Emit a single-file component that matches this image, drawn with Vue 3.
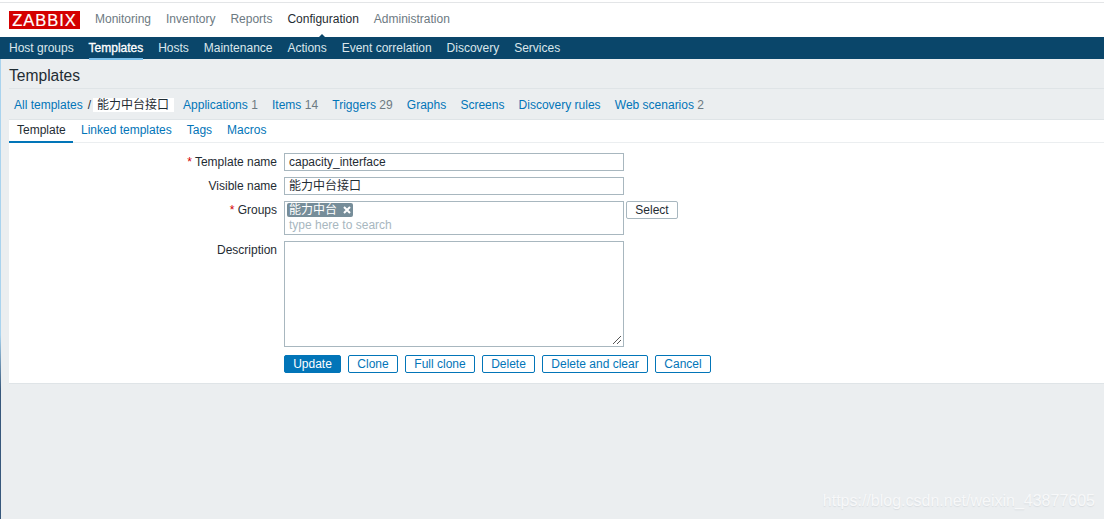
<script setup>
const topNav = ['Monitoring', 'Inventory', 'Reports', 'Configuration', 'Administration']
const subNav = ['Host groups', 'Templates', 'Hosts', 'Maintenance', 'Actions', 'Event correlation', 'Discovery', 'Services']
const crumbs = [
  ['Applications', '1'], ['Items', '14'], ['Triggers', '29'], ['Graphs', ''],
  ['Screens', ''], ['Discovery rules', ''], ['Web scenarios', '2']
]
const tabs = ['Template', 'Linked templates', 'Tags', 'Macros']
const buttons = ['Clone', 'Full clone', 'Delete', 'Delete and clear', 'Cancel']
</script>

<template>
  <div class="page">
    <div class="strip"></div>
    <header class="top">
      <div class="logo">ZABBIX</div>
      <nav class="top-nav">
        <a v-for="n in topNav" :key="n" :class="{ on: n === 'Configuration' }">{{ n }}</a>
      </nav>
    </header>
    <nav class="sub-nav">
      <a v-for="n in subNav" :key="n" :class="{ on: n === 'Templates' }">{{ n }}</a>
    </nav>
    <main class="main">
      <h1 class="title">Templates</h1>
      <div class="crumbs">
        <div class="path">
          <a>All templates</a><span class="slash">/</span><span class="current">能力中台接口</span>
        </div>
        <div class="links">
          <span v-for="c in crumbs" :key="c[0]"><a>{{ c[0] }}</a><i v-if="c[1]">{{ c[1] }}</i></span>
        </div>
      </div>
      <section class="panel">
        <div class="tabs">
          <a v-for="t in tabs" :key="t" :class="{ on: t === 'Template' }">{{ t }}</a>
        </div>
        <form class="form" @submit.prevent>
          <div class="row">
            <label class="label"><b>*</b> Template name</label>
            <div class="field">capacity_interface</div>
          </div>
          <div class="row">
            <label class="label">Visible name</label>
            <div class="field">能力中台接口</div>
          </div>
          <div class="row">
            <label class="label"><b>*</b> Groups</label>
            <div class="multi">
              <span class="chip">能力中台<svg width="8" height="8" viewBox="0 0 8 8"><path d="M1 1 7 7M7 1 1 7" stroke="#fff" stroke-width="2"/></svg></span>
              <span class="hint">type here to search</span>
            </div>
            <button class="select" type="button">Select</button>
          </div>
          <div class="row">
            <label class="label">Description</label>
            <div class="area">
              <svg class="grip" width="10" height="10" viewBox="0 0 10 10"><path d="M1 9 9 1M5 9 9 5" stroke="#555" stroke-width="1"/></svg>
            </div>
          </div>
          <div class="actions">
            <button class="btn primary" type="button">Update</button>
            <button v-for="b in buttons" :key="b" class="btn" type="button">{{ b }}</button>
          </div>
        </form>
      </section>
    </main>
    <div class="edge"></div>
    <div class="mark">https://blog.csdn.net/weixin_43877605</div>
  </div>
</template>

<style>
html, body { margin: 0; background: #ebeef0; }
</style>

<style scoped>
.page {
  position: relative;
  width: 1104px;
  height: 519px;
  overflow: hidden;
  background: #ebeef0;
  font: 12px "Liberation Sans", "Noto Sans CJK SC", sans-serif;
  color: #1f2c33;
}
a { color: inherit; text-decoration: none; }
.strip { height: 2px; background: #fff; border-bottom: 1px solid #e3e5e7; }
.top {
  box-sizing: border-box;
  height: 34px;
  background: #fff;
  display: flex;
  align-items: center;
  padding: 0 0 0 9px;
}
.logo {
  box-sizing: border-box;
  width: 71px;
  height: 18px;
  background: #d40000;
  color: #fff;
  font-size: 16.5px;
  line-height: 18px;
  text-align: center;
  letter-spacing: 1px;
  -webkit-text-stroke: .2px #fff;
}
.top-nav { display: flex; gap: 15px; margin-left: 15px; color: #6d7a82; margin-top: -3px; }
.top-nav .on { color: #1f2c33; position: relative; }
.top-nav .on::after {
  content: "";
  position: absolute;
  left: 29px;
  top: 22px;
  border: 6px solid transparent;
  border-top: 0;
  border-bottom-color: #0a466a;
}
.sub-nav {
  height: 22px;
  background: #0a466a;
  color: #dbe6ec;
  display: flex;
  gap: 14.9px;
  padding-left: 9px;
  line-height: 22px;
}
.sub-nav .on { color: #fff; -webkit-text-stroke: .3px #fff; box-shadow: inset 0 -1px 0 #7cc0ea, 0 1px 0 #7cc0ea; }
.main { display: flex; flex-direction: column; }
.title {
  margin: 0 0 0 9px;
  height: 30px;
  line-height: 33px;
  font-size: 15.6px;
  font-weight: normal;
  color: #1f2c33;
  box-sizing: border-box;
  border-bottom: 1px solid #dfe4e7;
}
.crumbs {
  margin-left: 9px;
  height: 31px;
  display: flex;
  align-items: center;
  border-bottom: 1px solid #dfe4e7;
  box-sizing: border-box;
  padding-top: 2px;
}
.path { display: flex; align-items: center; padding-left: 5px; color: #0275b8; }
.slash { margin: 0 2px 0 5px; color: #1f2c33; }
.current { background: #fff; padding-left: 4px; width: 81px; box-sizing: border-box; white-space: nowrap; color: #1f2c33; line-height: 14px; height: 14px; overflow: hidden; }
.links { display: flex; gap: 14.2px; margin-left: 9px; color: #0275b8; }
.links i { font-style: normal; color: #6d7a82; margin-left: 3.4px; }
.panel {
  margin-left: 9px;
  height: 264px;
  background: #fff;
  border-bottom: 1px solid #dfe4e7;
  box-sizing: border-box;
}
.tabs {
  height: 23px;
  display: flex;
  gap: 15px;
  line-height: 20px;
  color: #0275b8;
  border-bottom: 1px solid #ebeef0;
  box-sizing: border-box;
}
.tabs .on { padding: 0 8px; width: 64px; box-sizing: border-box; color: #1f2c33; box-shadow: inset 0 -1px 0 #0275b8, 0 1px 0 #0275b8; height: 22px; }
.tabs a.on { margin-right: -7px; }
.form { padding-top: 10px; display: flex; flex-direction: column; gap: 6px; }
.row { display: flex; align-items: flex-start; }
.label {
  width: 268px;
  text-align: right;
  line-height: 18px;
  margin-right: 7px;
  flex: none;
}
.label b { color: #d40000; font-weight: normal; }
.field, .multi, .area {
  box-sizing: border-box;
  width: 340px;
  border: 1px solid #a8b7bf;
  background: #fff;
  flex: none;
}
.field { height: 18px; line-height: 16px; padding-left: 4px; }
.multi { height: 34px; padding-left: 2px; display: flex; flex-direction: column; align-items: flex-start; }
.chip {
  margin-top: 1px;
  height: 14px;
  line-height: 14px;
  width: 66px;
  box-sizing: border-box;
  background: #768d99;
  color: #fff;
  padding-left: 2px;
  border-radius: 2px;
  display: flex;
  align-items: center;
  gap: 6px;
  white-space: nowrap;
}
.hint { color: #a8b7bf; line-height: 16px; padding-left: 2px; }
.select {
  box-sizing: border-box;
  width: 52px;
  height: 18px;
  margin-left: 2px;
  border: 1px solid #a8b7bf;
  border-radius: 2px;
  background: #fff;
  color: #1f2c33;
  font: inherit;
  padding: 0;
}
.area { height: 106px; position: relative; }
.grip { position: absolute; right: 1px; bottom: 1px; }
.actions { display: flex; gap: 7px; padding-left: 275px; margin-top: 2px; }
.btn {
  box-sizing: border-box;
  height: 18px;
  padding: 0;
  border: 1px solid #0275b8;
  border-radius: 2px;
  background: #fff;
  color: #0275b8;
  font: inherit;
  line-height: 16px;
}
.btn.primary { background: #0275b8; color: #fff; width: 57px; }
.btn:nth-child(2) { width: 50px; }
.btn:nth-child(3) { width: 70px; }
.btn:nth-child(4) { width: 53px; }
.btn:nth-child(5) { width: 106px; }
.btn:nth-child(6) { width: 56px; }
.edge {
  position: absolute;
  left: 0;
  top: 59px;
  bottom: 0;
  width: 1px;
  background: linear-gradient(#a9d3ee 0, #a9d3ee 60%, #37587c 72%, #37587c);
}
.mark {
  position: absolute;
  right: 9px;
  top: 492px;
  font-size: 16px;
  color: #f7f8f9;
  text-shadow: 0 1px 1px #d9dde0;
}
</style>
